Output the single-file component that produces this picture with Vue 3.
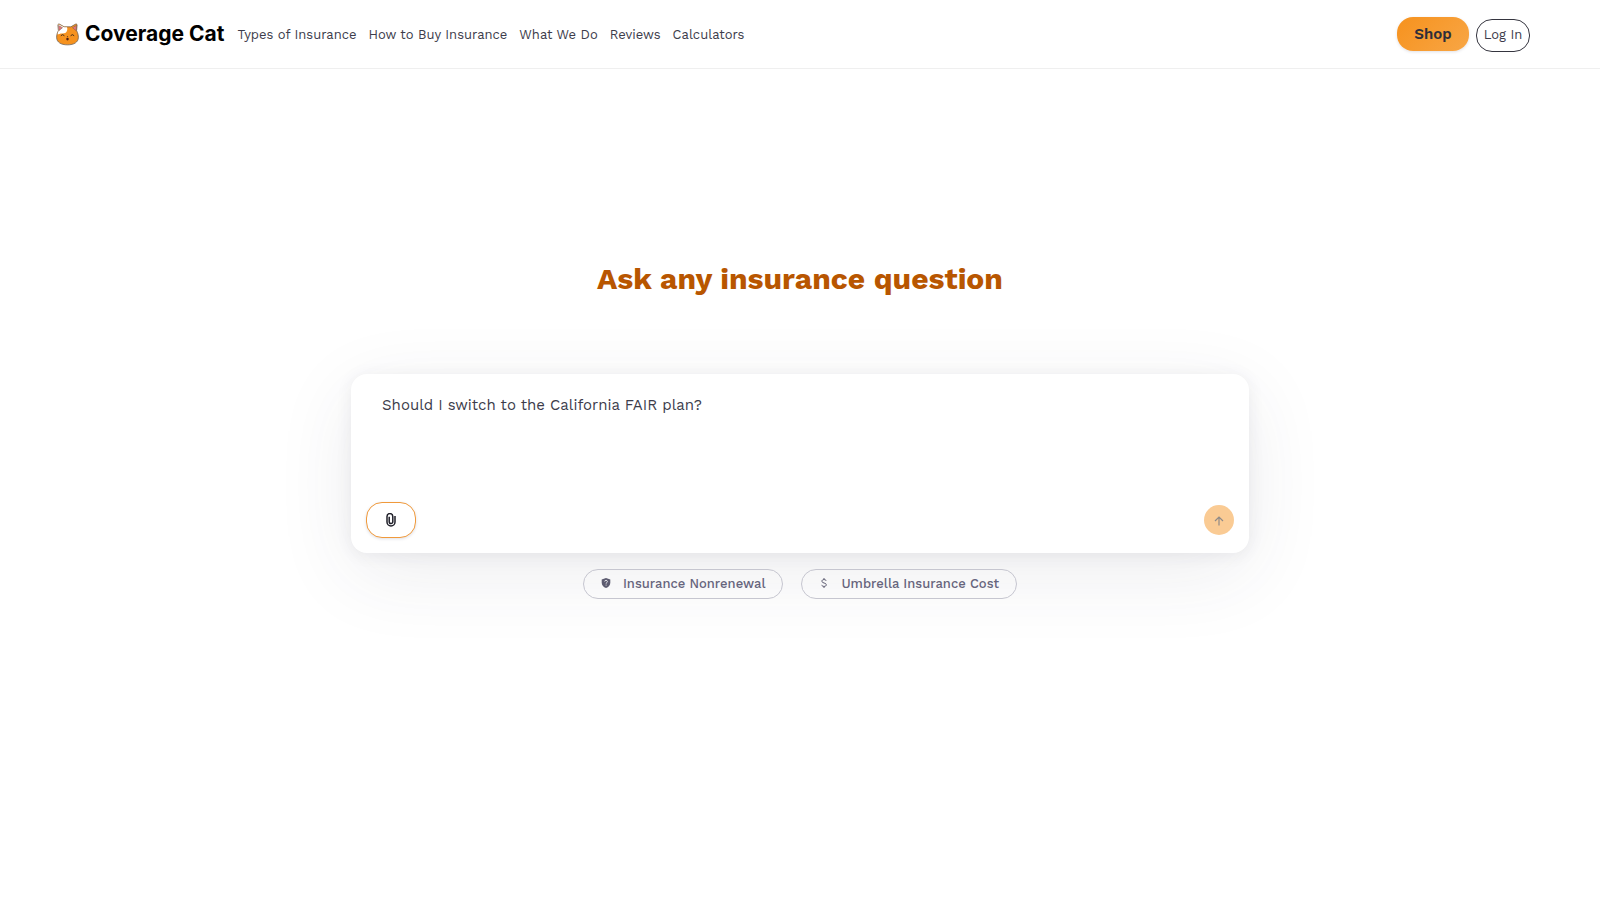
<template>
  <div class="page">
    <header class="header">
      <a class="brand" href="#">
        <svg class="cat" viewBox="0 0 24 24" aria-hidden="true">
          <path d="M2.500 8 2 2.200C2 1 3 .8 3.800 1.300L8.500 4h7l4.700-2.700c.8-.5 1.800-.3 1.800.9L21.500 8c1.200 2.300 2 4.800 1.800 7.500C23 20 19 22.800 12 22.800S1 20 .7 15.500C.5 12.800 1.300 10.300 2.500 8z" fill="#f6921e" stroke="#6b5a4a" stroke-width=".8" />
          <path d="M2.800 8.200 2.300 2.300c0-.8.600-1 1.200-.6L8.600 4.500H11.500c1 3-.5 6-3 6.300-2.600.2-4.300.4-6.800 1.200.1-1.400.5-2.700 1.100-3.800z" fill="#fff" />
          <path d="M3 8 2.600 2.500l4.200 2.400z" fill="#e5757b" stroke="#6b5a4a" stroke-width=".5" />
          <path d="m21 8 .4-5.500-4.200 2.400z" fill="#e5757b" stroke="#6b5a4a" stroke-width=".5" />
          <path d="M5.300 13q1.600-2 3.200 0M15.500 13q1.600-2 3.200 0" fill="none" stroke="#3c2a1a" stroke-width="1" stroke-linecap="round" />
          <path d="M11.200 13.800h1.600l-.8 1z" fill="#2d2620" />
          <ellipse cx="12" cy="16.800" rx="1.300" ry="1.500" fill="#4b1f1a" />
        </svg>
        <span>Coverage Cat</span>
      </a>
      <nav class="nav">
        <a v-for="link in links" :key="link" href="#">{{ link }}</a>
      </nav>
      <div class="actions">
        <button class="shop" type="button">Shop</button>
        <a class="login" href="#">Log In</a>
      </div>
    </header>

    <main class="main">
      <h1>Ask any insurance question</h1>
      <form class="card" @submit.prevent>
        <textarea v-model="question" aria-label="Insurance question"></textarea>
        <div class="tools">
          <button class="attach" type="button" aria-label="Attach a file">
            <svg viewBox="0 0 10 14" aria-hidden="true">
              <path d="M9 3v6a4 4 0 0 1-8 0V3.500a2.900 2.900 0 0 1 5.800 0v5.300a1.800 1.800 0 0 1-3.600 0V3.800" fill="none" stroke="#1f1f29" stroke-width="1.500" />
            </svg>
          </button>
          <button class="send" type="submit" aria-label="Send" disabled>
            <svg viewBox="0 0 10 12" aria-hidden="true">
              <path d="M5 11.500V3M1 7l4-4 4 4" fill="none" stroke="#8f8a88" stroke-width="1.200" />
            </svg>
          </button>
        </div>
      </form>
      <div class="chips">
        <button class="chip" type="button">
          <svg viewBox="0 0 10 12" aria-hidden="true">
            <path d="M5 1 9.300 2.500v3.200c0 2.500-1.800 4.500-4.300 5.300C2.500 10.200.7 8.200.7 5.700V2.500z" fill="#5c5b70" />
            <path d="M3.700 4.500c0-1.600 2.700-1.600 2.700 0 0 1-1.300 1-1.300 2.200M5.100 7.600v1" fill="none" stroke="#f4f4f6" stroke-width=".9" />
          </svg>
          Insurance Nonrenewal
        </button>
        <button class="chip" type="button">
          <svg viewBox="0 0 10 12" aria-hidden="true">
            <path d="M7.200 4C7 3 6.200 2.600 5 2.600 3.700 2.600 2.900 3.200 2.900 4.200c0 2.400 4.400 1.200 4.400 3.600 0 1-.9 1.600-2.200 1.600S2.900 8.900 2.700 7.900M5 1v1.600M5 9.400V11" fill="none" stroke="#5c5b70" stroke-width="1" />
          </svg>
          Umbrella Insurance Cost
        </button>
      </div>
    </main>
  </div>
</template>

<script setup>
import { ref } from 'vue'

const question = ref('Should I switch to the California FAIR plan?')
const links = ['Types of Insurance', 'How to Buy Insurance', 'What We Do', 'Reviews', 'Calculators']
</script>

<style>
body {
  background: #fff;
}
</style>

<style scoped>
.page,
.page button,
.page textarea {
  font-family: "Work Sans", "Open Sans", "Noto Sans", sans-serif;
}

.page * {
  box-sizing: border-box;
}

.page {
  min-height: 100vh;
  color: #3c3c4b;
}

a {
  color: inherit;
  text-decoration: none;
}

button {
  cursor: pointer;
  padding: 0;
}

.header {
  display: flex;
  align-items: center;
  padding: 16px 70px 16px 56px;
  border-bottom: 1px solid #efefef;
}

.brand {
  display: flex;
  align-items: center;
  gap: 6px;
  color: #000;
  font: 700 21px/36px Inter, sans-serif;
}

.cat {
  width: 23px;
  height: 23px;
}

.nav {
  display: flex;
  gap: 12px;
  margin-left: 13px;
  padding-top: 2px;
  font-size: 13px;
  line-height: 20px;
}

.actions {
  display: flex;
  align-items: center;
  gap: 7px;
  margin-left: auto;
}

.shop {
  width: 72px;
  height: 34px;
  border: 0;
  border-radius: 16px;
  background: linear-gradient(135deg, #f6921e, #f8a645);
  box-shadow: 0 1px 3px rgba(50, 50, 80, 0.15);
  color: #2d2d3a;
  font-size: 15px;
  font-weight: 600;
}

.login {
  width: 54px;
  height: 33px;
  margin-top: 2px;
  border: 1px solid #35353f;
  border-radius: 16px;
  font-size: 13px;
  line-height: 30px;
  text-align: center;
}

.main {
  max-width: 898px;
  margin: 0 auto;
  padding-top: 190px;
}

h1 {
  margin: 0 0 75px;
  color: #b85600;
  font-size: 30px;
  font-weight: 700;
  line-height: 40px;
  text-align: center;
}

.card {
  padding: 15px;
  border-radius: 16px;
  background: #fff;
  box-shadow: 0 20px 80px rgba(50, 50, 80, 0.09), 0 2px 16px rgba(50, 50, 80, 0.08);
}

textarea {
  display: block;
  width: 100%;
  height: 113px;
  padding: 4px 16px;
  border: 0;
  outline: 0;
  resize: none;
  background: transparent;
  color: #3c3c4b;
  font-size: 15px;
  line-height: 24px;
}

.tools {
  display: flex;
  align-items: center;
  justify-content: space-between;
}

.attach {
  display: flex;
  align-items: center;
  justify-content: center;
  width: 50px;
  height: 36px;
  border: 1px solid #f09a3c;
  border-radius: 16px;
  background: #fff;
  box-shadow: 0 1px 3px rgba(50, 50, 80, 0.15);
}

.attach svg {
  width: 10px;
  height: 14px;
}

.send {
  display: flex;
  align-items: center;
  justify-content: center;
  width: 30px;
  height: 30px;
  border: 0;
  border-radius: 50%;
  background: #facb94;
}

.send svg {
  width: 10px;
  height: 12px;
}

.chips {
  display: flex;
  justify-content: center;
  gap: 18px;
  margin-top: 16px;
}

.chip {
  display: flex;
  align-items: center;
  gap: 12px;
  height: 30px;
  padding: 0 17px 2px;
  border: 1px solid #c6c6d0;
  border-radius: 16px;
  background: transparent;
  color: #66647c;
  font-size: 13px;
  font-weight: 500;
}

.chip svg {
  width: 10px;
  height: 12px;
}
</style>
